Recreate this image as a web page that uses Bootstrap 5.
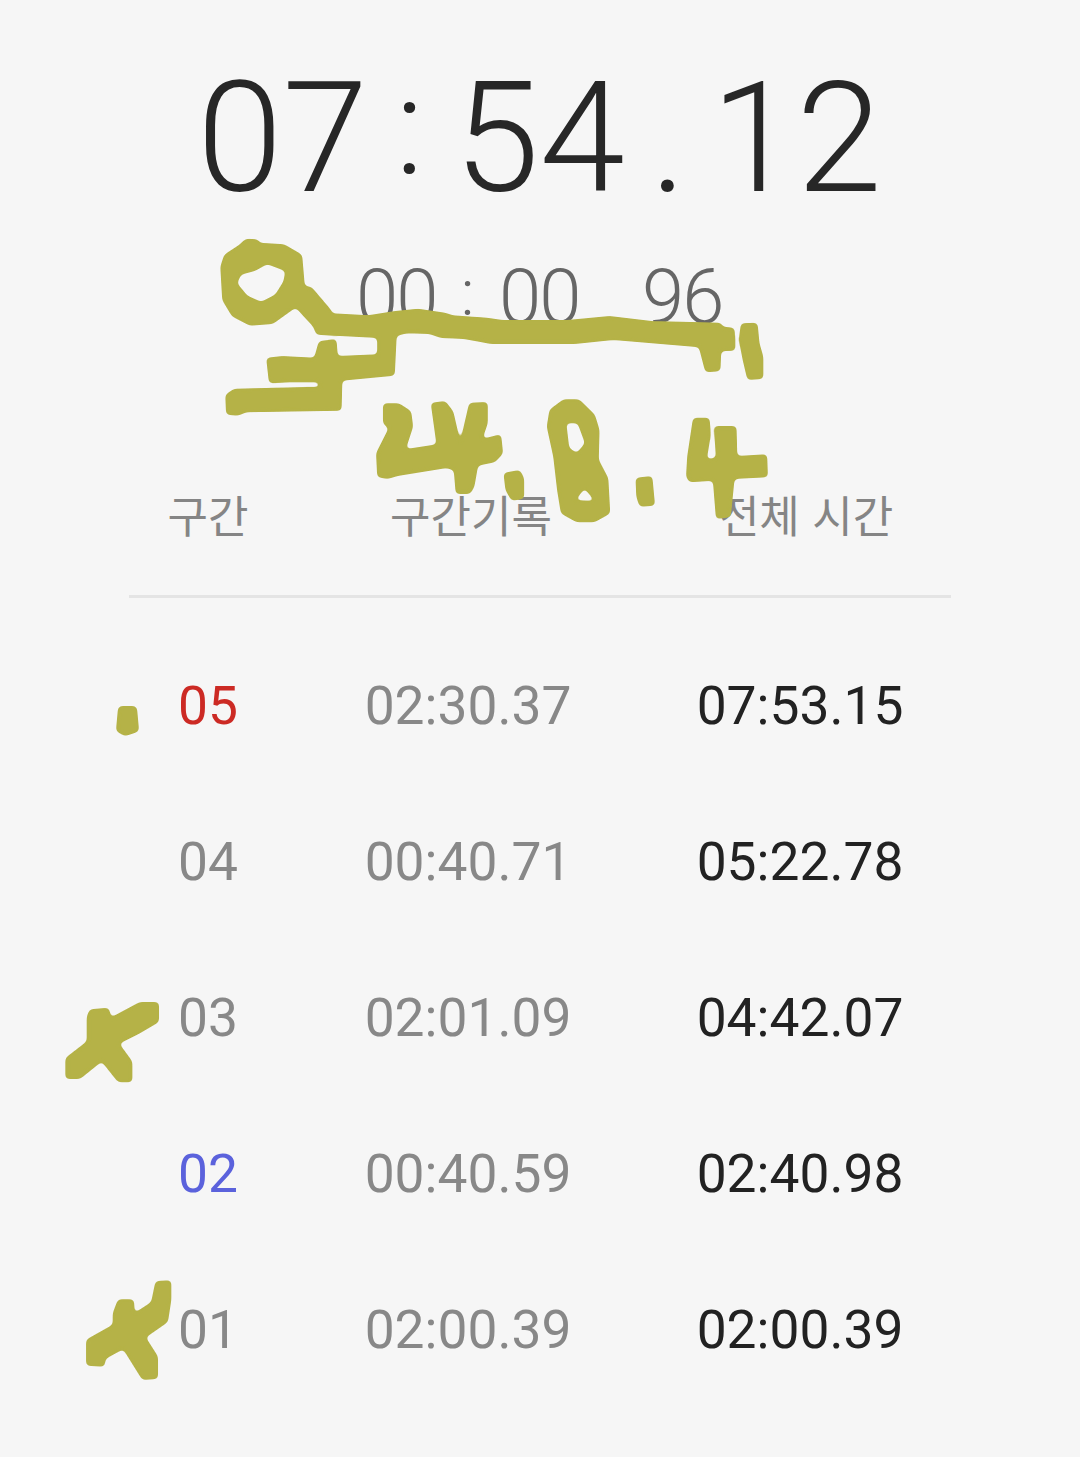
<!DOCTYPE html>
<html lang="ko">
<head>
  <meta charset="UTF-8">
  <meta name="viewport" content="width=device-width, initial-scale=1.0">
  <title>스톱워치</title>
  <link href="https://cdn.jsdelivr.net/npm/bootstrap@5.3.2/dist/css/bootstrap.min.css" rel="stylesheet">
  <style>
    html, body { height: 100%; }
    body {
      background: #f6f6f6;
      font-family: Roboto, "Noto Sans CJK KR", sans-serif;
      overflow: hidden;
    }
    .watch-page { position: relative; width: 1080px; height: 1457px; }
    .main-time {
      padding: 49px 0 0 197px;
      height: 230px;
      font-size: 154px;
      line-height: 180px;
      font-weight: 300;
      color: #272727;
    }
    .main-time .unit { width: 168px; }
    .main-time .sep { width: 89px; }
    .main-time .colon { font-size: 136px; margin-top: -12px; }
    .main-time .dot { padding-left: 4px; }
    .lap-time {
      height: 102px;
      font-size: 76px;
      line-height: 134px;
      font-weight: 300;
      color: #666;
      padding-left: 356px;
    }
    .lap-time .unit { width: 80px; letter-spacing: -2px; }
    .lap-time .sep { width: 63px; }
    .lap-time .colon { font-size: 65px; margin-top: -4px; }
    .lap-head {
      display: grid;
      grid-template-columns: 158px 368px 302px;
      margin: 152px 129px 0;
      height: 114px;
      border-bottom: 3px solid #e4e4e4;
      font-family: "Noto Sans CJK KR", sans-serif;
      font-size: 44px;
      font-weight: 400;
      line-height: 60px;
      color: #858585;
    }
    .lap-list { margin: 31px 129px 0; }
    .lap-row {
      display: grid;
      grid-template-columns: 158px 362px 302px;
      height: 156px;
      align-items: center;
      font-size: 53.3px;
      color: #888;
    }
    .lap-total { color: #222; }
    .lap-slow { color: #cc2a24; }
    .lap-fast { color: #5b62dc; }
    .scribble { position: absolute; top: 0; left: 0; pointer-events: none; }
    .scribble path { fill: #b5b246; fill-rule: evenodd; stroke: #b5b246; stroke-width: 4px; stroke-linejoin: round; }
  </style>
</head>
<body>
  <div class="watch-page">
    <!-- Timers -->
    <div class="main-time d-flex text-start">
      <span class="unit">07</span><span class="sep colon text-center">:</span><span class="unit">54</span><span class="sep dot text-center">.</span><span class="unit">12</span>
    </div>
    <div class="lap-time d-flex text-center">
      <span class="unit">00</span><span class="sep colon">:</span><span class="unit">00</span><span class="sep">.</span><span class="unit">96</span>
    </div>

    <!-- Lap table -->
    <div class="lap-head text-center">
      <span>구간</span><span>구간기록</span><span>전체 시간</span>
    </div>
    <div class="lap-list text-center">
      <div class="lap-row"><span class="lap-slow">05</span><span>02:30.37</span><span class="lap-total">07:53.15</span></div>
      <div class="lap-row"><span>04</span><span>00:40.71</span><span class="lap-total">05:22.78</span></div>
      <div class="lap-row"><span>03</span><span>02:01.09</span><span class="lap-total">04:42.07</span></div>
      <div class="lap-row"><span class="lap-fast">02</span><span>00:40.59</span><span class="lap-total">02:40.98</span></div>
      <div class="lap-row"><span>01</span><span>02:00.39</span><span class="lap-total">02:00.39</span></div>
    </div>

    <!-- Hand drawn marks on top of the screenshot -->
    <svg class="scribble" width="1080" height="1457" viewBox="0 0 1080 1457" aria-hidden="true">
      <defs>
        <!-- blur + threshold rounds the polygon corners like a finger stroke -->
        <filter id="ink" x="0" y="0" width="100%" height="100%" filterUnits="userSpaceOnUse" primitiveUnits="userSpaceOnUse">
          <feGaussianBlur stdDeviation="2"/>
          <feComponentTransfer>
            <feFuncA type="linear" slope="6" intercept="-2.5"/>
          </feComponentTransfer>
        </filter>
      </defs>
      <g filter="url(#ink)">
        <g transform="translate(200 230) scale(.3827 .3333)">
          <path d="M120 28 150 30 155 40 220 45 265 75 272 170 290 172 340 240 345 252 440 258 510 245 570 238 640 250 660 258 750 265 790 272 960 272 1070 260 1180 275 1360 280 1365 292 1395 295 1397 360 1360 362 1358 422 1322 425 1305 350 1080 328 980 340 760 340 690 325 630 322 600 310 540 308 512 316 507 435 370 450 368 540 120 545 100 555 70 552 68 495 90 478 315 472 310 455 235 455 182 458 175 385 215 380 300 385 312 335 355 330 358 380 465 375 465 322 305 312 298 290 250 230 190 280 130 285 85 258 60 210 55 110 65 75 105 45ZM175 100 225 122 220 155 198 195 160 218 122 198 95 160 106 132 145 120Z"/>
          <path d="M1415 282 1455 280 1460 340 1470 380 1470 445 1432 448 1420 390 1410 330Z"/>
          <path d="M480 522 520 522 550 545 555 590 535 660 620 645 605 520 640 515 660 545 680 645 705 520 750 518 750 580 735 630 785 615 790 670 770 695 725 705 715 770 705 790 670 790 665 720 645 712 520 735 490 745 465 740 462 670 495 595 480 580Z"/>
          <path d="M795 730 835 722 845 745 845 805 815 810 800 780Z"/>
          <path d="M915 540 950 510 990 510 1030 555 1042 600 1040 690 1065 745 1070 850 1030 875 985 875 945 850 935 780 925 680 908 590ZM955 578 988 578 1008 640 985 672 963 655ZM978 812 1005 772 1035 815Z"/>
          <path d="M1140 745 1180 740 1187 825 1150 828 1142 800Z"/>
          <path d="M1290 565 1330 565 1332 620 1322 690 1350 685 1345 590 1400 590 1402 680 1480 675 1482 740 1395 745 1385 860 1350 865 1342 750 1280 755 1272 740 1275 680Z"/>
        </g>
        <path d="M120 708 135 708 137 730 125 734 118 730Z"/>
        <g transform="translate(50 980) scale(.3333)">
          <path d="M120 90 175 85 182 115 270 68 325 68 325 125 265 160 205 190 245 245 245 305 205 305 155 242 90 295 48 295 48 235 112 185 112 110Z"/>
          <path d="M205 960 250 960 252 1002 305 968 318 905 362 903 362 960 352 1025 285 1072 322 1130 322 1195 278 1198 220 1105 165 1135 162 1158 110 1155 110 1080 190 1035 190 1000Z"/>
        </g>
      </g>
    </svg>
  </div>
  <script src="https://cdn.jsdelivr.net/npm/bootstrap@5.3.2/dist/js/bootstrap.bundle.min.js"></script>
</body>
</html>
